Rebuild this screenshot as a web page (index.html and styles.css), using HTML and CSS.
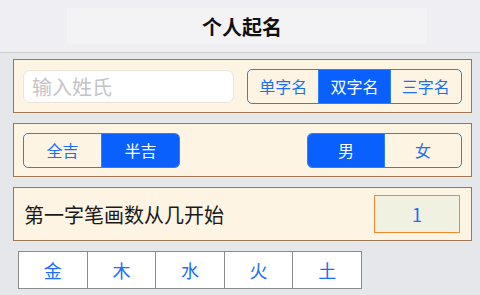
FILE: index.html
```html
<!DOCTYPE html>
<html lang="zh-CN">
<head>
  <meta charset="UTF-8" />
  <meta name="viewport" content="width=device-width, initial-scale=1.0" />
  <title>个人起名</title>
  <link rel="stylesheet" href="styles.css">
</head>
<body>
  <header class="navbar">
    <div class="navbar-inner">个人起名</div>
  </header>

  <main class="content">
    <section class="panel">
      <input class="surname" type="text" placeholder="输入姓氏" />
      <div class="segmented seg-length">
        <button class="seg">单字名</button>
        <button class="seg active">双字名</button>
        <button class="seg">三字名</button>
      </div>
    </section>

    <section class="panel">
      <div class="segmented seg-luck">
        <button class="seg">全吉</button>
        <button class="seg active">半吉</button>
      </div>
      <div class="segmented seg-gender">
        <button class="seg active">男</button>
        <button class="seg">女</button>
      </div>
    </section>

    <section class="panel">
      <span class="label">第一字笔画数从几开始</span>
      <div class="stroke-box">1</div>
    </section>

    <div class="elements">
      <button class="element">金</button>
      <button class="element">木</button>
      <button class="element">水</button>
      <button class="element">火</button>
      <button class="element">土</button>
    </div>
  </main>
</body>
</html>
```

FILE: styles.css
```css
:root {
  font-family: "Noto Sans CJK SC", "Noto Sans", sans-serif;
}

body {
  margin: 0;
  width: 480px;
  height: 295px;
  overflow: hidden;
  background: #e6e7eb;
}

button {
  font-family: inherit;
  cursor: pointer;
}

.navbar {
  height: 52px;
  display: flex;
  align-items: center;
  justify-content: center;
  background: #efeff3;
  border-bottom: 1px solid #cfcfd3;
}

.navbar-inner {
  width: 350px;
  height: 36px;
  margin-left: 14px;
  padding-right: 10px;
  display: flex;
  align-items: center;
  justify-content: center;
  background: #f3f3f6;
  font-size: 20px;
  font-weight: bold;
  color: #111;
}

.content {
  display: flex;
  flex-direction: column;
  gap: 10px;
  padding: 6px 8px 0 13px;
}

.panel {
  height: 52px;
  display: flex;
  align-items: center;
  justify-content: space-between;
  padding: 0 9px;
  background: #fdf4e4;
  border: 1px solid #9f7651;
}

.surname {
  width: 211px;
  height: 33px;
  box-sizing: border-box;
  padding: 0 8px;
  border: 1px solid #ece4d8;
  border-radius: 7px;
  background: #fff;
  font-family: inherit;
  font-size: 20px;
  outline: none;
}

.surname::placeholder {
  color: #c4c4c8;
}

.segmented {
  display: flex;
  height: 35px;
  box-sizing: border-box;
  border: 1px solid #2f7ff7;
  border-radius: 5px;
  overflow: hidden;
}

.seg {
  flex: 1;
  padding: 0;
  border: none;
  border-left: 1px solid #2f7ff7;
  background: transparent;
  color: #1a6ef7;
  font-size: 16px;
}

.seg:first-child {
  border-left: none;
}

.seg.active {
  background: #0a60fe;
  color: #fff;
}

.seg-length {
  width: 215px;
}

.seg-luck {
  width: 157px;
}

.seg-gender {
  width: 155px;
}

.label {
  font-size: 20px;
  color: #1a1a1a;
  padding-left: 1px;
}

.stroke-box {
  width: 86px;
  height: 38px;
  box-sizing: border-box;
  display: flex;
  align-items: center;
  justify-content: center;
  margin-right: 2px;
  border: 1.5px solid #f1882d;
  background: #f1f1e2;
  color: #1a6ef7;
  font-size: 18px;
}

.elements {
  display: flex;
  width: 344px;
  height: 38px;
  margin: 0 0 0 5px;
  box-sizing: border-box;
  border: 1.5px solid #8b8b8b;
  background: #fff;
}

.element {
  flex: 1;
  padding: 0;
  border: none;
  border-left: 1.5px solid #8b8b8b;
  background: #fff;
  color: #1a6ef7;
  font-size: 18px;
}

.element:first-child {
  border-left: none;
}
```
